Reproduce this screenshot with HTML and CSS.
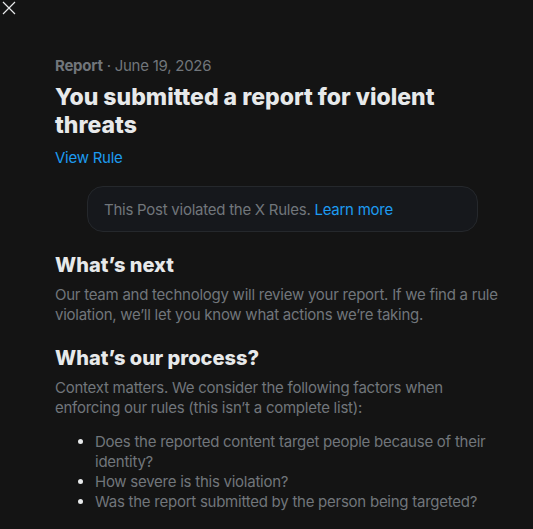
FILE: index.html
```html
<!DOCTYPE html>
<html>
<head>
<meta charset="utf-8">
<link rel="stylesheet" href="styles.css">
</head>
<body>
<div class="page">
  <button class="close" aria-label="Close">
    <svg viewBox="0 0 24 24" width="16" height="16"><path d="M3 3 L21 21 M21 3 L3 21" stroke="#e7e9ea" stroke-width="1.8" fill="none"/></svg>
  </button>
  <main class="content">
    <div class="meta"><span class="meta-strong">Report</span> · June 19, 2026</div>
    <h1 class="title">You submitted a report for violent threats</h1>
    <a class="link view-rule" href="#">View Rule</a>
    <div class="notice">This Post violated the X Rules. <a class="link" href="#">Learn more</a></div>
    <h2 class="heading">What’s next</h2>
    <p class="body">Our team and technology will review your report. If we find a rule violation, we’ll let you know what actions we’re taking.</p>
    <h2 class="heading">What’s our process?</h2>
    <p class="body">Context matters. We consider the following factors when enforcing our rules (this isn’t a complete list):</p>
    <ul class="list">
      <li>Does the reported content target people because of their identity?</li>
      <li>How severe is this violation?</li>
      <li>Was the report submitted by the person being targeted?</li>
    </ul>
  </main>
</div>
</body>
</html>
```
FILE: styles.css
```css
html, body {
  margin: 0;
  padding: 0;
  background: #141414;
}
body {
  font-family: "Inter", "Liberation Sans", sans-serif;
  color: #71767b;
  width: 533px;
  height: 529px;
  overflow: hidden;
}
.page {
  position: relative;
  height: 529px;
}
.close {
  position: absolute;
  left: 1px;
  top: 0;
  background: none;
  border: 0;
  padding: 0;
  width: 16px;
  height: 16px;
  display: flex;
  align-items: center;
  justify-content: center;
}
.content {
  padding: 56px 23px 0 55px;
  letter-spacing: -0.25px;
}
.meta {
  font-size: 15px;
  line-height: 20px;
  color: #71767b;
}
.meta-strong {
  font-weight: 700;
}
.title {
  margin: 7px 0 9px;
  font-size: 23px;
  line-height: 28px;
  font-weight: 800;
  letter-spacing: 0;
  color: #e7e9ea;
}
.link {
  color: #1d9bf0;
  text-decoration: none;
}
.view-rule {
  display: block;
  font-size: 15px;
  line-height: 20px;
}
.notice {
  margin: 18px 32px 0 32px;
  height: 46px;
  box-sizing: border-box;
  border: 1px solid #25282c;
  border-radius: 16px;
  background: #16181c;
  padding: 0 16px;
  display: flex;
  align-items: center;
  font-size: 15px;
  white-space: pre;
}
.heading {
  margin: 21px 0 8px;
  font-size: 20px;
  line-height: 24px;
  font-weight: 800;
  letter-spacing: 0;
  color: #e7e9ea;
}
.body {
  margin: 0;
  font-size: 15px;
  line-height: 20px;
}
.list {
  margin: 14px 0 0;
  padding-left: 40px;
  font-size: 15px;
  line-height: 20px;
}
.list li::marker {
  color: #e7e9ea;
}
```
